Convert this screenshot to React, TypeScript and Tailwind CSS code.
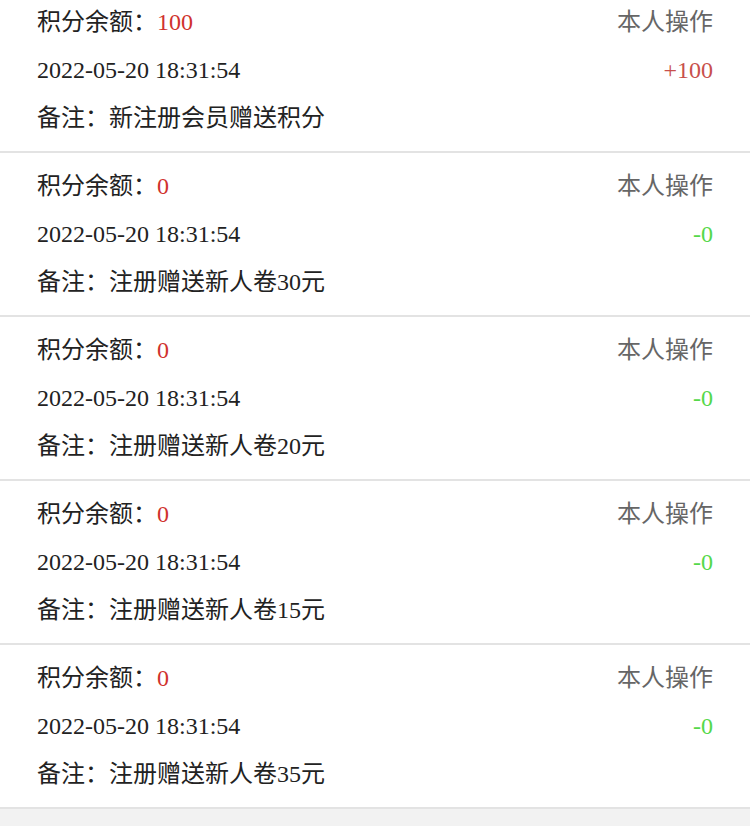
const records = [
  { balance: '100', change: '+100', note: '新注册会员赠送积分', plus: true },
  { balance: '0', change: '-0', note: '注册赠送新人卷30元', plus: false },
  { balance: '0', change: '-0', note: '注册赠送新人卷20元', plus: false },
  { balance: '0', change: '-0', note: '注册赠送新人卷15元', plus: false },
  { balance: '0', change: '-0', note: '注册赠送新人卷35元', plus: false },
];

export default function App() {
  return (
    <div
      className="min-h-screen bg-[#f2f2f2] overflow-hidden"
      style={{ fontFamily: '"Liberation Serif", "Noto Sans CJK SC", sans-serif' }}
    >
      <div className="mt-[-11px]">
        {records.map((r, i) => (
          <div key={i} className="bg-white border-b-2 border-[#e3e3e3] pt-[9px] pb-[9px] px-[37px] text-[24px] text-[#222]">
            <div className="flex h-12 items-center justify-between">
              <div>
                积分余额：<span className="text-[#d0322d]">{r.balance}</span>
              </div>
              <div className="text-[#666]">本人操作</div>
            </div>
            <div className="flex h-12 items-center justify-between">
              <div>2022-05-20 18:31:54</div>
              <div className={r.plus ? 'text-[#c8504c]' : 'text-[#55d84a]'}>{r.change}</div>
            </div>
            <div className="flex h-12 items-center">
              <div>备注：{r.note}</div>
            </div>
          </div>
        ))}
      </div>
    </div>
  );
}
